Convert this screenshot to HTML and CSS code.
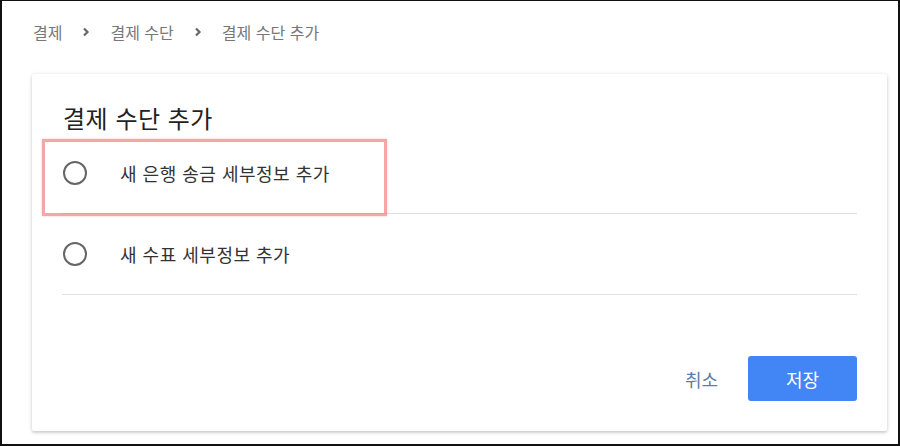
FILE: index.html
```html
<!DOCTYPE html>
<html lang="ko">
<head>
    <meta charset="UTF-8">
    <meta name="viewport" content="width=device-width, initial-scale=1.0">
    <title>결제 수단 추가</title>
    <link rel="stylesheet" href="styles.css">
</head>
<body>
    <!-- Breadcrumb -->
    <nav class="breadcrumb">
        <span>결제</span>
        <svg class="chevron" width="8" height="10" viewBox="0 0 8 10"><path d="M2 1.5 L5.5 5 L2 8.5" fill="none" stroke="#666" stroke-width="2.2"/></svg>
        <span>결제 수단</span>
        <svg class="chevron" width="8" height="10" viewBox="0 0 8 10"><path d="M2 1.5 L5.5 5 L2 8.5" fill="none" stroke="#666" stroke-width="2.2"/></svg>
        <span>결제 수단 추가</span>
    </nav>

    <!-- Card -->
    <div class="card">
        <h1 class="card-title">결제 수단 추가</h1>
        <label class="option">
            <span class="radio"></span>
            <span class="option-text">새 은행 송금 세부정보 추가</span>
        </label>
        <label class="option">
            <span class="radio"></span>
            <span class="option-text">새 수표 세부정보 추가</span>
        </label>
        <div class="actions">
            <button class="btn-cancel">취소</button>
            <button class="btn-save">저장</button>
        </div>
        <!-- highlight annotation -->
        <div class="highlight"></div>
    </div>
</body>
</html>
```

FILE: styles.css
```css
* {
    box-sizing: border-box;
}
body {
    font-family: "Noto Sans CJK KR", "Noto Sans", sans-serif;
    background-color: #fff;
    margin: 0;
    height: 446px;
    border: 2px solid #111;
    border-top-width: 1px;
    overflow: hidden;
}

/* Breadcrumb */
.breadcrumb {
    display: flex;
    align-items: center;
    gap: 20px;
    padding: 19px 0 0 31px;
    height: 43px;
    font-size: 16px;
    color: #777;
}
.chevron {
    display: block;
}

/* Card */
.card {
    position: relative;
    margin: 30px 0 0 30px;
    width: 855px;
    height: 357px;
    padding: 29px 30px 30px 30px;
    background-color: #fff;
    box-shadow: 0 1px 4px rgba(0, 0, 0, 0.18), 0 2px 2px rgba(0, 0, 0, 0.08);
    border-radius: 2px;
    display: flex;
    flex-direction: column;
}
.card-title {
    margin: 0 0 0 1px;
    font-size: 24px;
    font-weight: 400;
    letter-spacing: 0.5px;
    line-height: 30px;
    color: #222;
}
.option {
    display: flex;
    align-items: center;
    height: 81px;
    border-bottom: 1px solid #e0e0e0;
    padding-bottom: 1px;
}
.radio {
    width: 24px;
    height: 24px;
    margin-left: 1px;
    border: 2px solid #666;
    border-radius: 50%;
}
.option-text {
    margin-left: 33px;
    font-size: 18px;
    letter-spacing: 0.5px;
    color: #333;
}

/* Actions */
.actions {
    margin-top: auto;
    display: flex;
    justify-content: flex-end;
    align-items: center;
    gap: 30px;
}
.btn-cancel {
    background: none;
    border: none;
    font-family: inherit;
    font-size: 18px;
    color: #5b7fa8;
    padding: 0;
}
.btn-save {
    width: 109px;
    height: 45px;
    background-color: #4285f4;
    color: #fff;
    border: none;
    border-radius: 3px;
    font-family: inherit;
    font-size: 18px;
}

/* red annotation box */
.highlight {
    position: absolute;
    left: 10px;
    top: 65px;
    width: 345px;
    height: 77px;
    border: 3px solid rgba(240, 125, 125, 0.68);
    box-shadow: 0 0 2px rgba(240, 125, 125, 0.45);
}
```
